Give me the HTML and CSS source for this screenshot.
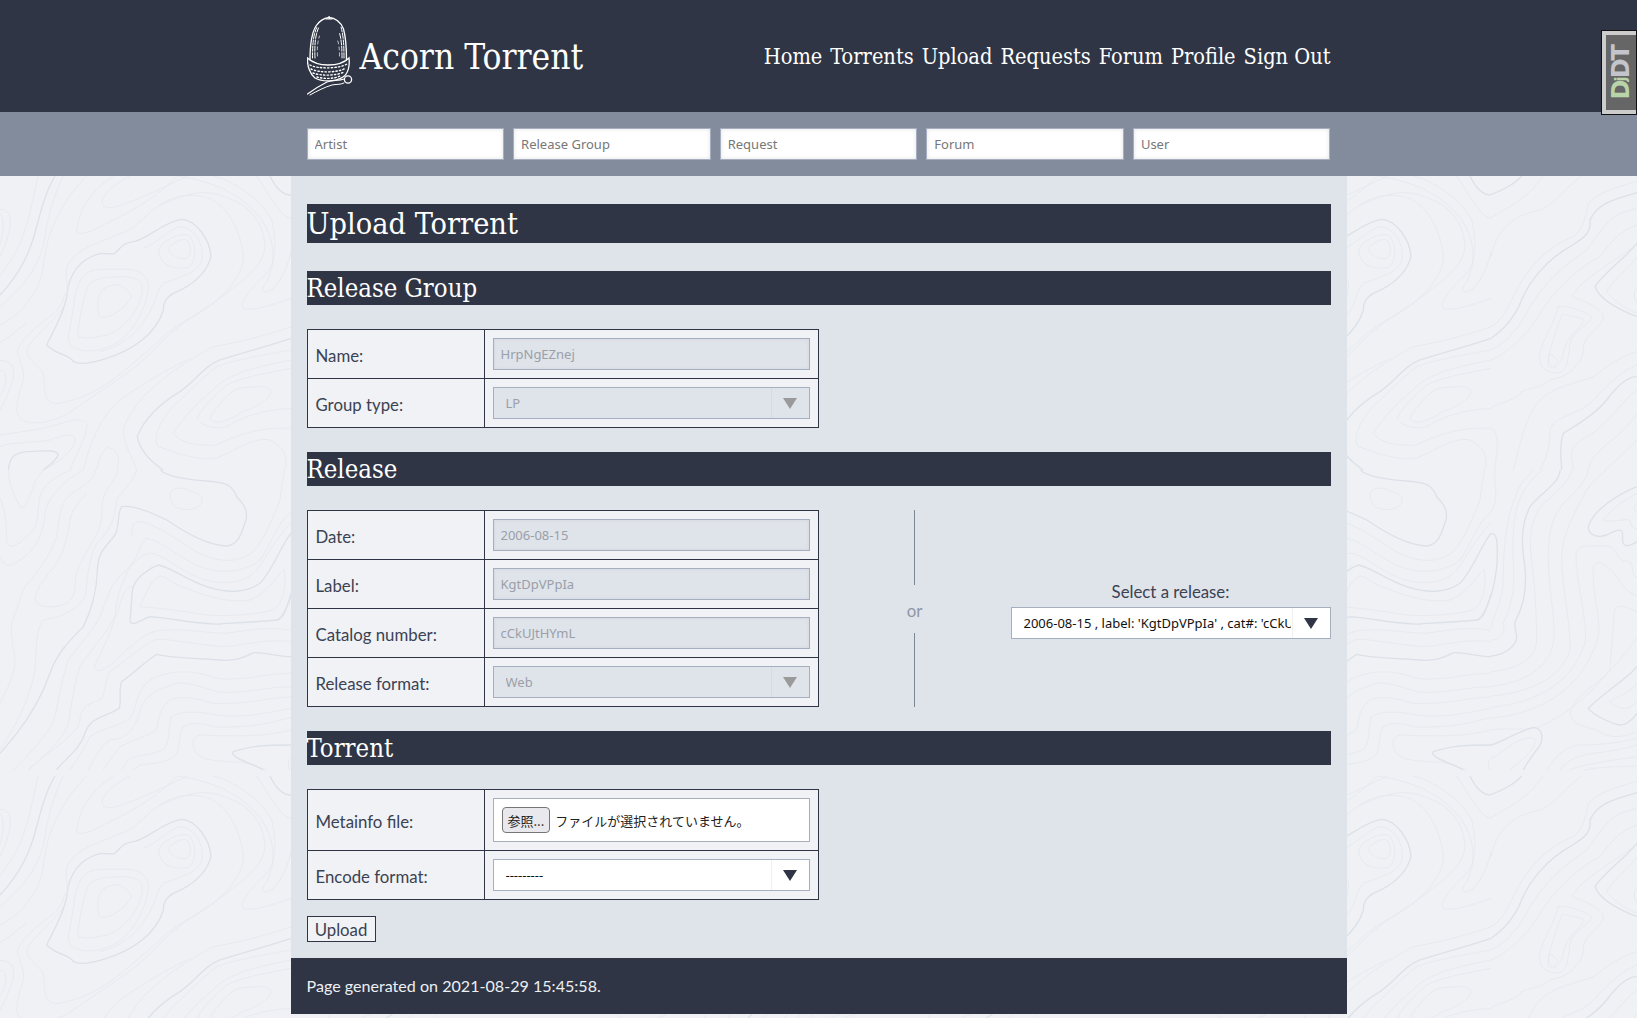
FILE: index.html
```html
<!DOCTYPE html>
<html lang="en">
<head>
  <meta charset="UTF-8">
  <meta name="viewport" content="width=device-width, initial-scale=1.0">
  <title>Upload Torrent :: Acorn Torrent</title>
  <link rel="stylesheet" href="styles.css">
</head>
<body>
  <!-- topographic page background, one 600x600 tile -->
  <svg class="topo" aria-hidden="true">
    <defs>
      <pattern id="topoTile" width="600" height="600" patternUnits="userSpaceOnUse">
        <g id="tileLines" class="topo-lines">
          <g transform="translate(0 170) scale(.3333)">
            <path class="thick" d="M140 525 C150 500 190 440 200 380 C205 320 230 270 300 250 L340 252 C360 240 365 218 400 215 C440 210 490 155 545 148 C590 150 630 210 633 260 C620 310 580 345 520 370 C495 385 490 400 490 420 C470 490 400 540 320 565 C280 578 240 585 220 575 C210 555 170 555 140 525Z"/>
            <path d="M205 505 C210 470 220 420 225 380 C235 320 260 300 300 298 L380 298 C420 298 450 325 445 355 C440 400 420 450 380 495 C340 535 280 550 240 540 C220 535 205 525 205 505Z"/>
            <path d="M233 490 C240 440 250 380 265 345 C280 325 320 320 370 320 C415 320 430 340 427 365 C420 420 370 480 320 495 C280 505 230 510 233 490Z"/>
            <path d="M293 400 C295 360 320 345 350 345 C380 350 395 370 392 385 C370 420 330 445 305 442 C295 435 293 420 293 400Z"/>
            <path d="M503 240 C515 220 540 205 560 210 C575 225 575 255 560 265 C535 270 515 255 503 240Z"/>
            <path d="M476 240 C490 210 530 190 565 195 C590 215 590 270 570 290 C530 305 475 285 476 240Z"/>
            <path d="M430 235 C470 225 510 170 545 170 C590 180 615 230 605 275 C590 310 530 325 490 340 C470 355 470 400 440 440 C420 480 370 530 300 545"/>
            <path class="thick" d="M0 375 C60 310 90 250 110 170 C125 110 145 50 165 18"/>
            <path d="M0 410 C70 350 120 290 135 200 C145 120 175 50 190 18"/>
            <path d="M0 465 C70 430 120 360 130 290 C140 180 190 90 260 18"/>
            <path d="M115 18 C95 100 80 190 50 240 C30 280 10 300 0 320"/>
            <path d="M230 185 C240 100 290 50 340 18 M230 185 C235 195 265 190 300 170 C360 140 450 100 530 20"/>
            <path d="M305 100 C315 120 340 115 380 100 C430 80 500 50 560 18 M305 100 C310 70 340 45 390 18"/>
            <path d="M200 290 C230 235 290 220 350 195 C420 175 430 130 490 100 C540 65 620 70 660 105 C700 140 730 210 730 270 C720 340 640 410 560 450 C500 485 470 520 400 580 C330 640 260 690 170 700 C130 700 135 660 130 610 C100 570 70 560 85 530 C130 470 190 430 200 390 C205 350 195 320 200 290Z"/>
            <path d="M52 545 C60 580 75 600 70 630 C55 680 40 720 60 745 C90 770 160 760 220 720 C300 660 400 610 470 530 C530 470 590 430 640 400 C700 350 790 300 795 230 C790 130 720 90 640 70 C580 60 530 85 480 105"/>
            <path d="M52 545 C60 510 110 470 150 440 C175 420 190 400 195 370"/>
            <path d="M530 18 C620 30 700 60 760 120 C830 190 835 290 790 350 C780 370 800 370 820 355 C850 325 865 280 873 245"/>
            <path d="M725 410 C730 375 780 330 800 310 C830 270 830 210 815 150 C790 100 720 40 640 18 M725 410 C735 430 800 410 873 385"/>
            <path class="thick" d="M810 18 C830 60 850 75 873 75"/>
            <path d="M770 18 C800 60 840 140 873 145"/>
            <path class="thick" d="M873 505 C800 530 720 550 660 570 C610 590 590 630 540 665 C480 700 430 750 412 800 C420 845 460 880 490 900"/>
            <path d="M873 470 C790 500 700 520 640 530 C570 570 510 600 430 680 C390 730 360 770 375 810 C385 850 400 870 410 900"/>
            <path d="M873 540 C790 555 700 570 650 590 C600 630 560 670 510 720 C470 770 460 810 475 830 C530 850 620 880 660 860 C710 840 760 800 810 810 C850 830 865 860 855 900"/>
            <path d="M873 570 C780 590 720 600 660 640 C600 690 550 740 520 790 C540 820 600 830 650 825 C700 800 770 770 873 775"/>
            <path d="M873 595 C800 610 730 620 680 645 C640 680 600 720 592 745 C600 765 640 780 680 770 C720 745 780 720 873 715"/>
            <path d="M630 745 C650 710 690 660 720 655 C750 650 800 645 812 660 C815 685 780 705 730 725 C690 750 640 770 630 745Z"/>
            <path d="M0 118 C25 118 35 140 30 170 C20 220 10 240 0 260 M0 135 C8 135 12 160 8 190 C5 205 2 215 0 225"/>
            <path d="M0 572 C30 570 45 590 40 620 C30 665 10 700 0 720 M0 600 C15 600 22 620 15 645 C10 660 5 670 0 680"/>
            <path d="M0 518 C30 500 50 480 80 460"/>
            <path d="M0 795 C60 785 130 780 200 755 C240 745 265 750 260 775 C255 810 225 860 210 900"/>
            <path d="M0 830 C30 815 90 820 150 810 C190 795 230 785 225 815 C215 850 170 880 130 900"/>
            <path class="thick" d="M25 900 C30 860 40 850 80 845 C120 845 170 835 175 855 C170 870 150 885 130 900"/>
            <path d="M290 900 C300 860 310 835 325 833 C345 835 360 860 355 880 L350 900"/>
            <path d="M250 900 C270 820 300 740 360 690 C430 640 500 600 560 570"/>
          </g>
          <g transform="translate(0 470) scale(.3333)">
            <path class="thick" d="M480 0 C510 25 580 30 640 35 C690 40 700 55 710 80 C730 100 745 120 738 150 C725 190 715 225 680 228 C620 225 560 190 500 150 C440 120 390 105 365 110 C350 130 360 170 345 195 C320 230 295 240 292 300 C290 370 275 420 250 470 C210 510 170 550 150 610 C125 680 90 740 50 790 C30 815 10 840 0 850"/>
            <path d="M510 70 C520 50 550 50 575 65 C600 70 610 80 605 100 C595 120 550 125 525 110 C515 100 508 85 510 70Z"/>
            <path d="M395 200 C395 165 400 155 420 155 C460 160 520 200 580 240 C640 275 710 285 760 245 C790 215 820 140 840 90 C845 50 850 20 853 0"/>
            <path d="M430 205 C450 200 500 230 560 270 C620 310 720 320 780 270 C810 230 830 160 873 125"/>
            <path d="M455 250 C480 250 540 300 600 325 C660 345 730 345 770 300 C800 260 830 200 873 160"/>
            <path class="thick" d="M400 350 C410 320 450 295 475 285 C510 290 560 330 620 350 C680 370 740 370 780 340 C820 300 840 230 873 190"/>
            <path class="thick" d="M390 455 C395 400 395 360 400 350 M390 455 C400 470 420 450 450 440 C520 445 600 465 660 462 C720 458 780 455 830 450 C845 448 850 435 855 425 C865 400 870 385 873 370"/>
            <path d="M420 410 C440 370 450 330 480 318 C500 320 520 345 560 355 C620 380 690 400 750 390 C800 370 830 320 853 298 C860 350 850 400 820 420 C760 435 680 440 620 435 C560 425 490 415 420 410Z"/>
            <path d="M283 590 C290 620 330 590 380 540 C420 510 440 480 500 480 C560 475 620 490 680 490 C750 480 800 470 870 480"/>
            <path d="M283 590 C300 550 330 500 345 440 C350 370 370 320 410 260 C425 220 435 205 445 205"/>
            <path d="M873 515 C800 505 740 525 670 530 C600 525 530 510 470 507 C420 530 380 570 330 605 C310 640 320 670 300 690 C260 700 240 720 240 750 C235 790 170 830 130 860 L85 900"/>
            <path class="thick" d="M873 560 C830 560 790 545 760 548 C730 565 700 575 660 570 C600 565 520 565 470 553 C430 580 400 610 365 635 C355 660 365 690 358 715 C320 740 270 740 255 790 C240 840 190 870 170 900"/>
            <path d="M873 610 C800 610 720 635 650 625 C590 600 520 600 470 620 C420 640 410 690 400 730 C380 770 310 770 270 800 C250 840 230 870 210 900"/>
            <path d="M873 650 C800 650 720 675 650 665 C600 650 560 635 530 640 C470 660 440 670 420 720 C410 770 380 810 330 810 C300 830 280 870 265 900"/>
            <path d="M873 680 C800 685 720 705 640 700 C590 685 550 675 510 690 C480 710 475 750 470 780 C440 800 400 810 360 830 C340 860 320 880 310 900"/>
            <path d="M873 715 C800 730 720 745 650 735 C600 725 550 720 515 740 C505 770 510 810 495 835 C460 860 410 850 385 870 L365 900"/>
            <path d="M873 742 C800 765 710 775 640 770 C610 760 570 755 550 770 C535 800 540 830 530 850 C510 880 450 880 420 885 L400 900"/>
            <path d="M873 780 C800 800 700 800 600 795 C580 800 570 820 590 850 C620 880 680 870 740 880 L800 900"/>
            <path class="thick" d="M873 825 C810 825 760 825 700 845 C690 855 720 870 760 885 L790 900"/>
            <path d="M25 0 C25 40 40 70 60 110 C75 125 85 90 100 50 C105 30 115 15 130 0"/>
            <path d="M0 85 C15 110 20 170 20 215 C30 250 70 210 100 180 C120 150 110 100 125 65 C140 40 170 15 215 0"/>
            <path d="M0 255 C10 290 25 295 60 270 C110 240 130 190 135 130 C140 90 180 40 250 0"/>
            <path d="M75 350 C110 310 150 260 170 200 C180 130 180 100 215 70 C250 50 290 20 285 0"/>
            <path d="M105 385 C105 410 140 412 170 410 C215 400 225 380 225 340 C225 290 280 220 300 170 C310 130 300 90 320 60 C340 30 350 15 355 0 M105 385 C110 350 140 320 170 280 C190 250 205 190 210 150 C215 120 240 90 260 70"/>
            <path d="M130 450 C170 445 230 425 255 380 C265 330 260 280 290 220 C330 180 345 150 350 90 C365 60 400 40 410 0"/>
            <path d="M0 700 C30 640 45 610 45 570 C40 530 30 490 35 460 C50 420 65 370 75 350"/>
            <path d="M0 840 C40 780 90 690 105 600 C110 540 105 480 130 450"/>
            <path d="M40 900 C90 850 150 790 165 740 C175 690 190 610 205 570 C240 520 280 480 300 440 C320 390 330 340 370 310 C410 270 430 250 455 250"/>
            <path d="M85 900 C130 860 190 810 205 760 C215 700 225 630 240 590 C270 540 330 480 355 420 C370 370 375 350 400 350"/>
          </g>
          <g transform="translate(140 170) scale(.3333)">
            <path class="thick" d="M453 73 C480 65 520 45 545 18"/>
            <path d="M453 143 C490 120 560 90 610 18"/>
            <path d="M453 260 C470 190 500 140 600 120 C650 100 680 50 725 18"/>
            <path class="thick" d="M453 505 C490 480 525 440 545 390 C570 330 620 270 690 230 C730 205 755 190 750 150 C770 100 830 85 891 68"/>
            <path d="M453 470 C490 450 510 400 530 360 C560 300 620 230 700 200 C730 180 740 130 745 100 C770 70 830 50 891 35"/>
            <path d="M453 540 C500 520 540 470 570 410 C610 340 680 280 740 240 C770 200 800 150 840 130 L891 115"/>
            <path d="M453 570 C510 550 580 470 600 430 C630 380 700 300 780 260 C810 220 840 180 891 165"/>
            <path d="M697 380 C720 390 790 410 790 445 C780 480 730 490 730 540 C725 590 680 620 630 630 C590 660 560 655 545 665 C530 690 490 695 453 712 M697 380 C720 330 800 290 891 222"/>
            <path d="M598 560 C605 510 640 470 655 410 C680 405 740 425 755 440 C750 465 700 480 690 520 C685 570 680 600 660 608 C620 610 598 595 598 560Z"/>
            <path d="M625 570 C635 520 650 470 668 432 C690 440 720 440 732 450 C720 480 680 500 672 540 C665 590 640 600 625 590Z"/>
            <path d="M626 552 C630 548 650 565 654 572 C650 585 640 590 632 585 C625 575 625 560 626 552Z"/>
            <path class="thick" d="M891 220 C850 270 790 310 765 350 C780 390 840 420 891 440"/>
            <path d="M891 262 C860 300 820 330 800 365 C820 390 860 420 891 430"/>
            <path d="M891 355 C880 365 878 385 891 398"/>
            <path d="M891 545 C840 560 800 590 760 620 C710 640 640 650 600 690 C560 730 540 820 520 900"/>
            <path class="thick" d="M891 620 C860 620 830 650 800 690 C760 740 700 770 670 790 C655 830 665 870 665 900"/>
            <path d="M891 660 C850 690 810 750 770 780 C730 810 690 820 695 860 L700 900"/>
            <path d="M891 810 C860 840 830 870 795 900"/>
            <path d="M745 900 C750 860 790 830 830 800 C860 770 880 750 891 730"/>
            <path d="M891 585 C830 610 790 660 750 700 C700 740 640 740 630 780 C630 820 620 870 600 900"/>
            <path d="M453 775 C470 785 475 810 470 850 L465 900"/>
          </g>
          <g transform="translate(140 470) scale(.3333)">
            <path d="M453 125 C480 90 460 40 465 0"/>
            <path class="thick" d="M453 192 C468 185 472 210 472 250 C472 330 450 400 425 440 L410 452"/>
            <path d="M453 475 C470 410 490 380 490 330 C490 250 495 150 530 70 C545 30 570 15 580 0"/>
            <path d="M453 510 C490 510 495 480 490 460 C520 390 525 350 520 280 C515 200 520 100 560 50 C580 20 600 5 610 0"/>
            <path class="thick" d="M453 558 C490 555 530 530 530 500 C525 470 520 460 530 445 C555 400 560 350 555 290 C545 230 540 170 570 110 C600 70 660 40 660 0"/>
            <path d="M453 605 C520 600 590 570 590 510 C590 430 585 350 575 270 C565 200 575 140 610 100 C650 70 690 30 695 0"/>
            <path d="M453 650 C530 640 620 610 640 520 C650 460 625 360 625 260 C625 180 640 130 680 90 C720 50 740 30 745 0"/>
            <path d="M453 678 C540 670 660 640 690 540 C695 480 665 350 665 260 C670 180 700 140 740 60 C770 20 790 10 800 0"/>
            <path d="M453 712 C560 700 690 660 735 520 C745 460 710 350 708 260 C708 235 720 230 740 228 L800 228 C830 230 830 265 850 272 C880 275 875 285 880 310 L891 325"/>
            <path d="M453 745 C580 730 720 680 775 500 C785 450 755 370 760 290 C770 265 800 280 830 320 C855 360 870 370 891 378"/>
            <path d="M453 780 C520 770 570 790 620 760 C700 720 760 660 810 600 C815 530 820 450 825 415 C840 400 870 415 891 425"/>
            <path d="M891 505 C860 540 830 590 780 630 C740 660 700 690 690 730 C695 765 740 770 770 780 C800 800 830 810 891 785"/>
            <path class="thick" d="M891 590 C870 620 800 660 745 715 C760 735 810 760 840 765 C860 765 880 745 891 730"/>
            <path d="M891 640 C870 670 830 680 808 695 C820 710 850 720 870 712 L891 695"/>
            <path class="thick" d="M891 50 C830 75 760 120 745 170 C745 195 770 205 800 195 C830 180 850 170 848 200 C845 230 860 235 891 215"/>
            <path d="M891 70 C850 90 800 130 790 150 C810 160 850 145 870 150 C875 170 880 180 891 175"/>
            <path d="M891 100 C880 105 880 120 891 125"/>
            <path class="thick" d="M453 825 C480 820 520 790 580 772 C610 775 615 810 590 840 C575 860 560 880 550 900"/>
            <path d="M453 865 C470 860 500 830 530 815 C560 800 590 800 587 815 C570 860 530 880 510 900 M453 865 C440 875 445 890 450 900"/>
            <path d="M620 900 C650 850 680 830 720 825 C800 825 850 815 891 805"/>
            <path d="M660 900 C680 870 720 855 760 850 C810 845 860 835 891 825"/>
            <path d="M690 900 C720 885 790 875 891 860"/>
            <path d="M730 900 C780 890 840 890 891 888"/>
          </g>
        </g>
        <use href="#tileLines" y="-600"/>
      </pattern>
    </defs>
    <rect width="100%" height="100%" fill="url(#topoTile)"/>
  </svg>

  <header class="site-head">
    <div class="wrap head-row">
      <a href="#" class="logo">
        <svg class="acorn" viewBox="0 0 46 80" width="46" height="80" aria-hidden="true">
          <g fill="none" stroke="#fff" stroke-linecap="round">
            <path stroke-width="1.3" d="M3 44 C3 30 4 18 9 10 C13 4 18 2 22 1.5 C28 2 34 6 36.5 13 C39 22 39.5 34 39.5 44"/>
            <path stroke-width="1.2" d="M22 0 L22.5 2.5 M19 3 L25 3"/>
            <path stroke-width="1" stroke-dasharray="5 1.5" d="M5.5 42 C5.5 30 6 19 10 11 M8 42 C7.5 30 8 20 11.5 12 M37 42 C37 30 36.5 20 34 11 M35 42 C35 32 34.5 24 32.5 17"/>
            <path stroke-width=".7" stroke-dasharray="3 3" d="M10.5 40 C10 32 10.5 26 12.5 20 M32.5 40 C32.5 34 32 28 30.5 24"/>
            <path stroke-width="1.3" d="M0.5 42 C6 47 14 49 21 49 C29 49 37 47 42 42 C43 50 41 58 36 61 C28 66 15 66 8 62 C3 58 0 50 0.5 42Z"/>
            <path stroke-width="1.4" stroke-dasharray="1.4 2.2" d="M3 49 C10 53 32 53 40 48 M4 53 C12 57 31 57 39 52 M6 57 C14 60 29 60 37 56 M10 61 C17 63 27 63 33 60"/>
            <path stroke-width="1.2" d="M0.5 78 C6 74 12 70 20 66 C26 64 32 65 37 63"/>
            <path stroke-width="1" d="M3 79 C10 75 18 71 25 69 C29 68 33 69 37 67"/>
            <circle stroke-width="1.3" cx="41" cy="63.5" r="3.6"/>
          </g>
        </svg>
        <span class="logo-text">Acorn Torrent</span>
      </a>
      <nav class="main-nav">
        <a href="#">Home</a>
        <a href="#">Torrents</a>
        <a href="#">Upload</a>
        <a href="#">Requests</a>
        <a href="#">Forum</a>
        <a href="#">Profile</a>
        <a href="#">Sign Out</a>
      </nav>
    </div>
  </header>

  <div class="search-bar">
    <div class="wrap search-row">
      <input type="text" placeholder="Artist">
      <input type="text" placeholder="Release Group">
      <input type="text" placeholder="Request">
      <input type="text" placeholder="Forum">
      <input type="text" placeholder="User">
    </div>
  </div>

  <div class="page">
    <main class="content">
      <h1>Upload Torrent</h1>

      <h2>Release Group</h2>
      <table class="form-table">
        <tr>
          <th>Name:</th>
          <td><input type="text" value="HrpNgEZnej" disabled></td>
        </tr>
        <tr>
          <th>Group type:</th>
          <td>
            <div class="select-box">
              <select disabled><option>LP</option></select>
            </div>
          </td>
        </tr>
      </table>

      <h2>Release</h2>
      <div class="release-row">
        <table class="form-table">
          <tr>
            <th>Date:</th>
            <td><input type="text" value="2006-08-15" disabled></td>
          </tr>
          <tr>
            <th>Label:</th>
            <td><input type="text" value="KgtDpVPpIa" disabled></td>
          </tr>
          <tr>
            <th>Catalog number:</th>
            <td><input type="text" value="cCkUJtHYmL" disabled></td>
          </tr>
          <tr>
            <th>Release format:</th>
            <td>
              <div class="select-box">
                <select disabled><option>Web</option></select>
              </div>
            </td>
          </tr>
        </table>
        <div class="or-col">
          <span class="or-line"></span>
          <span class="or-text">or</span>
          <span class="or-line"></span>
        </div>
        <div class="pick-release">
          <label class="pick-label">Select a release:</label>
          <div class="select-box">
            <select><option>2006-08-15 , label: 'KgtDpVPpIa' , cat#: 'cCkUJtHYmL'</option></select>
          </div>
        </div>
      </div>

      <h2>Torrent</h2>
      <table class="form-table">
        <tr class="file-row">
          <th>Metainfo file:</th>
          <td>
            <div class="file-box">
              <button type="button" class="file-btn">参照...</button>
              <span class="file-name">ファイルが選択されていません。</span>
            </div>
          </td>
        </tr>
        <tr>
          <th>Encode format:</th>
          <td>
            <div class="select-box">
              <select><option>---------</option></select>
            </div>
          </td>
        </tr>
      </table>

      <button type="submit" class="upload-btn">Upload</button>
    </main>
    <footer class="site-foot">Page generated on 2021-08-29 15:45:58.</footer>
  </div>

  <a href="#" class="djdt"><span class="djdt-inner"><span class="djdt-text"><span class="djdt-dj">D<small>j</small></span>DT</span></span></a>
</body>
</html>
```

FILE: styles.css
```css
body {
  margin: 0;
  height: 1018px;
  overflow: hidden;
  background-color: #eff1f5;
  color: #3b4252;
  font-family: "Lato", sans-serif;
  font-size: 16.8px;
}
a {
  color: inherit;
  text-decoration: none;
}
.topo {
  position: fixed;
  top: 0;
  left: 0;
  width: 100%;
  height: 100%;
  z-index: -1;
}
.topo-lines path {
  fill: none;
  stroke: #e2e6ec;
  stroke-width: 2;
}
.topo-lines path.thick {
  stroke: #dce1e8;
  stroke-width: 4;
}
.wrap {
  width: 1024px;
  margin: 0 auto;
}

/* cabecera */
.site-head {
  height: 112px;
  background-color: #2f3544;
  color: white;
}
.head-row {
  display: flex;
  align-items: center;
  justify-content: space-between;
  height: 100%;
}
.logo {
  display: flex;
  align-items: center;
  gap: 7px;
  font-family: "DejaVu Serif Condensed", "DejaVu Serif", serif;
}
.acorn {
  margin-top: -1px;
}
.logo-text {
  margin-top: 2px;
  font-size: 35px;
}
.main-nav {
  display: flex;
  gap: 8px;
  font-family: "DejaVu Serif Condensed", "DejaVu Serif", serif;
  font-size: 21.6px;
}

/* buscadores */
.search-bar {
  height: 64px;
  background-color: #838c9c;
}
.search-row {
  display: flex;
  gap: 9px;
  padding-top: 16px;
}
.search-row input {
  flex: 1;
  min-width: 0;
}
input[type="text"] {
  box-sizing: border-box;
  height: 32px;
  width: 100%;
  padding: 0 7px;
  border: 1px solid #a5afc0;
  border-radius: 0;
  background-color: white;
  box-shadow: inset 0 0 4px #e3e3e3;
  color: #2f3544;
  font-family: "Noto Sans", sans-serif;
  font-size: 13px;
  outline: none;
}
input[type="text"]::placeholder {
  color: #777;
}
input[type="text"]:disabled {
  background-color: #dfe3ea;
  box-shadow: inset 0 0 3px #d0d4dc;
  color: #9a9fa8;
}

/* contenido */
.page {
  width: 1056px;
  margin: 0 auto;
  background-color: #dfe3ea;
}
.content {
  padding: 28px 16px 16px;
}
h1, h2 {
  margin: 0;
  background-color: #2f3544;
  color: white;
  font-family: "DejaVu Serif Condensed", "DejaVu Serif", serif;
  font-weight: normal;
}
h1 {
  height: 39px;
  margin-bottom: 28px;
  font-size: 30.4px;
  line-height: 39px;
}
h2 {
  height: 34px;
  margin-bottom: 24px;
  font-size: 25.5px;
  line-height: 34px;
}
.form-table {
  width: 512px;
  margin-bottom: 24px;
  table-layout: fixed;
  border-collapse: collapse;
  background-color: #f0f2f6;
}
.form-table th, .form-table td {
  border: 1px solid #2f3544;
  height: 49px;
  padding: 0 8px;
  box-sizing: border-box;
}
.form-table th {
  width: 177px;
  padding-top: 2px;
  font-weight: normal;
  text-align: left;
  white-space: nowrap;
}
.form-table .file-row th, .form-table .file-row td {
  height: 61px;
}
.select-box {
  position: relative;
}
.select-box::after {
  content: "";
  position: absolute;
  top: 11px;
  right: 13px;
  border-left: 7px solid transparent;
  border-right: 7px solid transparent;
  border-top: 11px solid #2f3544;
  pointer-events: none;
}
.select-box::before {
  content: "";
  position: absolute;
  top: 1px;
  bottom: 1px;
  right: 38px;
  width: 1px;
  background-color: #eef0f3;
  pointer-events: none;
}
.select-box select {
  display: block;
  box-sizing: border-box;
  width: 100%;
  height: 32px;
  padding: 0 39px 0 12px;
  border: 1px solid #a5afc0;
  border-radius: 0;
  background-color: white;
  appearance: none;
  color: #111;
  font-family: "Noto Sans", sans-serif;
  font-size: 13px;
}
.select-box select:disabled {
  background-color: #dfe3ea;
  color: #9a9fa8;
  opacity: 1;
}
.select-box:has(select:disabled)::after {
  border-top-color: #9a9a9a;
}
.select-box:has(select:disabled)::before {
  background-color: #d6dae2;
}
.file-box {
  display: flex;
  align-items: center;
  gap: 5px;
  box-sizing: border-box;
  height: 44px;
  padding: 0 8px;
  border: 1px solid #a5afc0;
  background-color: white;
  font-family: "Noto Sans CJK JP", sans-serif;
  font-size: 13px;
}
.file-btn {
  box-sizing: border-box;
  height: 26px;
  padding: 0 5px;
  border: 1px solid #767676;
  border-radius: 4px;
  background-color: #e9e9ed;
  color: #222;
  font-family: inherit;
  font-size: 13px;
}
.file-name {
  color: #222;
}
.release-row {
  display: grid;
  grid-template-columns: 512px 1fr 320px;
  margin-bottom: 24px;
}
.release-row .form-table {
  margin-bottom: 0;
}
.or-col {
  display: flex;
  flex-direction: column;
  align-items: center;
  color: #8f96a3;
}
.or-line {
  flex: 1;
  width: 1px;
  background-color: #7f8897;
}
.or-text {
  padding: 14px 0 11px;
  line-height: 23px;
}
.pick-release {
  align-self: center;
}
.pick-label {
  display: block;
  margin-bottom: 2px;
  padding-top: 1px;
  text-align: center;
  line-height: 26px;
}
.upload-btn {
  display: block;
  box-sizing: border-box;
  width: 69px;
  height: 26px;
  margin-top: -8px;
  padding: 0;
  border: 1px solid #2f3544;
  border-radius: 0;
  background-color: #f0f2f6;
  color: #3b4252;
  font-family: inherit;
  font-size: inherit;
}
.site-foot {
  height: 56px;
  padding: 0 16px;
  background-color: #2f3544;
  color: #eceff4;
  font-size: 16.1px;
  line-height: 56px;
}

/* pestaña debug toolbar */
.djdt {
  position: fixed;
  top: 30px;
  right: 0;
  display: flex;
  box-sizing: border-box;
  width: 36px;
  height: 85px;
  border: 1px solid #111;
}
.djdt-inner {
  flex: 1;
  display: flex;
  align-items: center;
  justify-content: center;
  border: 4px solid #ccc;
  border-right: 0;
  background-color: #666;
  color: #c4c4cc;
}
.djdt-text {
  writing-mode: vertical-rl;
  transform: rotate(180deg);
  font-family: "DejaVu Sans", sans-serif;
  font-weight: bold;
  font-size: 24px;
  line-height: 1;
  letter-spacing: -2px;
}
.djdt-dj {
  color: #b8d4a8;
}
.djdt-dj small {
  font-size: 15px;
}
```
